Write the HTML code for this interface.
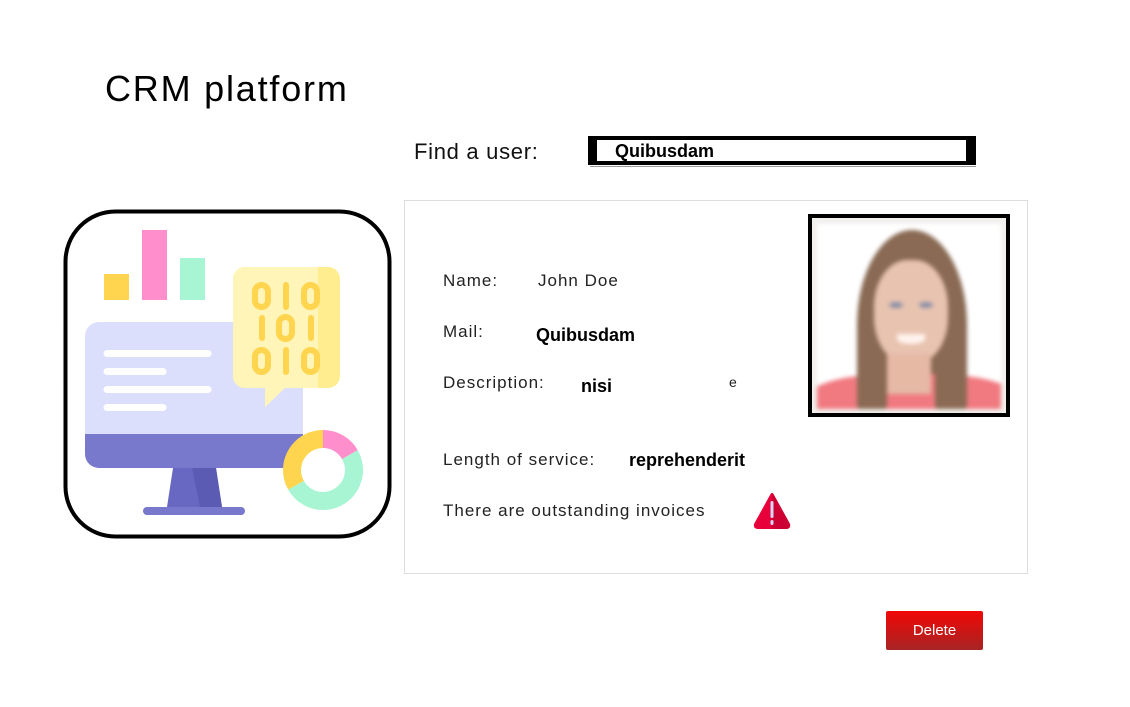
<!DOCTYPE html>
<html><head><meta charset="utf-8"><style>
*{margin:0;padding:0;box-sizing:border-box}
body{width:1130px;height:707px;background:#fff;position:relative;overflow:hidden;font-family:"Liberation Sans",sans-serif;color:#111}
.a{position:absolute;white-space:nowrap}
.lbl{font-size:17px;color:#222;letter-spacing:1px}
.b{font-weight:bold;font-size:18px;color:#000}
</style></head><body>
<div class="a" style="left:105px;top:68px;font-size:36px;color:#000;letter-spacing:1.8px">CRM platform</div>
<div class="a" style="left:414px;top:139px;font-size:22px;color:#111;letter-spacing:0.7px">Find a user:</div>
<div class="a" style="left:588px;top:136px;width:388px;height:29px;border:solid #000;border-width:4px 10px 4px 9px;background:#fff"></div>
<div class="a" style="left:590px;top:166px;width:386px;height:1px;background:#999"></div>
<div class="a b" style="left:615px;top:141px">Quibusdam</div>

<svg class="a" style="left:0;top:0" width="400" height="550">
<rect x="65.5" y="211.5" width="324" height="325" rx="50" fill="#fff" stroke="#000" stroke-width="4"/>
<rect x="104" y="274" width="25" height="26" fill="#ffd54f"/>
<rect x="142" y="230" width="25" height="70" fill="#ff8fcc"/>
<rect x="180" y="258" width="25" height="42" fill="#a8f5d3"/>
<rect x="85" y="322" width="218" height="146" rx="14" fill="#dcdffc"/>
<path d="M85 434H303V454a14 14 0 0 1-14 14H99a14 14 0 0 1-14-14Z" fill="#7878cd"/>
<g stroke="#fff" stroke-width="7" stroke-linecap="round">
<line x1="107" y1="353.5" x2="208" y2="353.5"/><line x1="107" y1="371.5" x2="163" y2="371.5"/>
<line x1="107" y1="389.5" x2="208" y2="389.5"/><line x1="107" y1="407.5" x2="163" y2="407.5"/></g>
<path d="M173 468H216L222 507H167Z" fill="#6868c2"/>
<path d="M192 468H216L222 507H200Z" fill="#5b5bb3"/>
<rect x="143" y="507" width="102" height="8" rx="4" fill="#7878cd"/>
<rect x="233" y="267" width="107" height="121" rx="12" fill="#ffed8f"/>
<path d="M245 267H318V388H285L265 407V388H245a12 12 0 0 1-12-12V279a12 12 0 0 1 12-12Z" fill="#fff5b8"/>
<g fill="none" stroke="#ffd54f" stroke-width="6" stroke-linecap="round">
<rect x="255" y="285" width="13" height="22" rx="6.5"/><line x1="286" y1="285" x2="286" y2="307"/><rect x="304" y="285" width="13" height="22" rx="6.5"/>
<line x1="262" y1="318" x2="262" y2="338"/><rect x="279" y="317" width="13" height="22" rx="6.5"/><line x1="311" y1="318" x2="311" y2="338"/>
<rect x="255" y="350" width="13" height="22" rx="6.5"/><line x1="286" y1="350" x2="286" y2="372"/><rect x="304" y="350" width="13" height="22" rx="6.5"/></g>
<g transform="rotate(-90 323 470)" fill="none" stroke-width="18">
<circle cx="323" cy="470" r="31" stroke="#ff8fcc" stroke-dasharray="32.5 300"/>
<circle cx="323" cy="470" r="31" stroke="#a8f5d3" stroke-dasharray="0 32.5 97.4 300"/>
<circle cx="323" cy="470" r="31" stroke="#ffd54f" stroke-dasharray="0 129.9 64.9 300"/></g>
</svg>

<div class="a" style="left:404px;top:200px;width:624px;height:374px;border:1px solid #ddd"></div>
<div class="a lbl" style="left:443px;top:271px">Name:</div>
<div class="a lbl" style="left:538px;top:271px">John Doe</div>
<div class="a lbl" style="left:443px;top:322px">Mail:</div>
<div class="a b" style="left:536px;top:325px">Quibusdam</div>
<div class="a lbl" style="left:443px;top:373px">Description:</div>
<div class="a b" style="left:581px;top:376px">nisi</div>
<div class="a lbl" style="left:729px;top:374px;font-size:14px">e</div>
<div class="a lbl" style="left:443px;top:450px">Length of service:</div>
<div class="a b" style="left:629px;top:450px">reprehenderit</div>
<div class="a lbl" style="left:443px;top:501px">There are outstanding invoices</div>
<svg class="a" style="left:752px;top:491px" width="40" height="40">
<path d="M20 2Q21 2 22 4L38 33Q39 38 34 38H6Q1 38 2 33L18 4Q19 2 20 2Z" fill="#e8003a"/>
<path d="M20 2Q21 2 22 4L38 33Q39 38 34 38H20Z" fill="#cc0033"/>
<rect x="18.5" y="10" width="3" height="17" rx="1.5" fill="#d6d9f5"/>
<rect x="18.5" y="29" width="3" height="5" rx="1.5" fill="#d6d9f5"/>
</svg>

<div class="a" style="left:808px;top:214px;width:202px;height:203px;border:4px solid #000;background:#f3f1ee;overflow:hidden">
<div class="a" style="left:5px;top:6px;width:184px;height:185px;background:#fff;overflow:hidden;filter:blur(2px)">
<div class="a" style="left:40px;top:6px;width:110px;height:190px;border-radius:50% 50% 20% 20%;background:#8a6a54"></div>
<div class="a" style="left:-10px;top:150px;width:210px;height:60px;border-radius:40% 40% 0 0;background:#f07a80"></div>
<div class="a" style="left:40px;top:90px;width:30px;height:100px;background:#8a6a54;border-radius:10px"></div>
<div class="a" style="left:118px;top:90px;width:32px;height:100px;background:#8a6a54;border-radius:10px"></div>
<div class="a" style="left:57px;top:36px;width:74px;height:104px;border-radius:45%;background:#e8c3b0"></div>
<div class="a" style="left:70px;top:130px;width:44px;height:40px;background:#e6b9a5"></div>
<div class="a" style="left:72px;top:78px;width:14px;height:6px;border-radius:50%;background:#8a8fa8"></div>
<div class="a" style="left:102px;top:78px;width:14px;height:6px;border-radius:50%;background:#8a8fa8"></div>
<div class="a" style="left:80px;top:110px;width:28px;height:10px;border-radius:0 0 50% 50%;background:#fff3ee"></div>
</div></div>

<div class="a" style="left:886px;top:611px;width:97px;height:39px;border-radius:2px;background:linear-gradient(#f10707,#a82424);color:#fff;font-size:15px;text-align:center;line-height:39px">Delete</div>
</body></html>
